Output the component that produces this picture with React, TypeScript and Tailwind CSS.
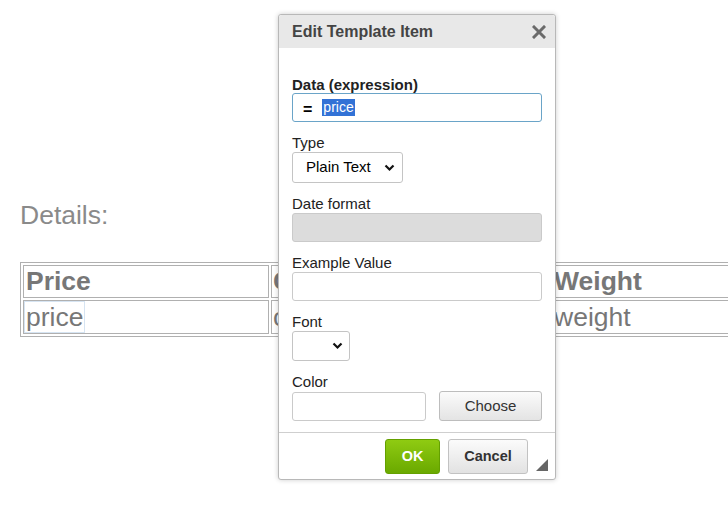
const Chevron = () => (
  <svg width="11" height="8" viewBox="0 0 11 8" className="shrink-0">
    <polyline points="1.5,1.5 5.5,5.5 9.5,1.5" fill="none" stroke="#111" strokeWidth="2.2" />
  </svg>
);

const Label: React.FC<{ children: React.ReactNode; bold?: boolean }> = ({ children, bold }) => (
  <div className={`h-[16px] text-[15px] leading-[16px] text-[#222] ${bold ? "font-bold" : ""}`}>{children}</div>
);

const App: React.FC = () => {
  return (
    <div className="relative w-[728px] h-[528px] overflow-hidden bg-white font-['Liberation_Sans',Arial,sans-serif]">
      {/* page behind the dialog */}
      <div className="pt-[200px] pl-[20px]">
        <div className="text-[26.5px] leading-[30px] text-[#8a8a8a]">Details:</div>
        <table className="mt-[32px] w-[900px] border border-[#b0b0b0] border-separate border-spacing-[2px] text-[26.5px] leading-[29px] text-[#777]">
          <tbody>
            <tr className="h-[33px]">
              <th className="w-[246px] border border-[#b0b0b0] px-[2px] py-0 text-left font-bold">Price</th>
              <th className="w-[279px] border border-[#b0b0b0] px-[1px] py-0 text-left font-bold">C</th>
              <th className="border border-[#b0b0b0] px-[1px] py-0 text-left font-bold">Weight</th>
            </tr>
            <tr className="h-[33px]">
              <td className="border border-[#b0b0b0] p-0">
                <span className="inline-block border border-[#d6e4f2] px-[1px] leading-[30px]">price</span>
              </td>
              <td className="border border-[#b0b0b0] px-[1px] py-0">c</td>
              <td className="border border-[#b0b0b0] px-[1px] py-0">weight</td>
            </tr>
          </tbody>
        </table>
      </div>

      {/* dialog */}
      <div className="absolute left-[278px] top-[14px] w-[278px] h-[466px] flex flex-col border border-[#b8b8b8] rounded-[3px] bg-white shadow-[0_0_5px_rgba(0,0,0,0.2)]">
        <div className="h-[33px] shrink-0 flex items-center justify-between pl-[13px] pr-[9px] bg-[#e8e8e8] rounded-t-[3px]">
          <span className="text-[16px] font-bold text-[#444]">Edit Template Item</span>
          <svg width="14" height="14" viewBox="0 0 14 14">
            <path d="M2 2 L12 12 M12 2 L2 12" stroke="#6a6a6a" strokeWidth="3" strokeLinecap="square" />
          </svg>
        </div>

        <div className="flex-1 px-[13px] pt-[29px]">
          <Label bold>Data (expression)</Label>
          <div className="h-[29px] flex items-center border border-[#6aa4c8] rounded-[3px] pl-[10px] text-[14px]">
            <span className="font-bold text-black text-[16px] mt-[4px]">=</span>
            <span className="ml-[10px] bg-[#3272d6] text-white leading-[17px] px-[1px]">price</span>
          </div>

          <div className="mt-[13px]">
            <Label>Type</Label>
            <div className="mt-[1px] w-[111px] h-[31px] flex items-center justify-between border border-[#c4c4c4] rounded-[3px] pl-[13px] pr-[7px] text-[15px] text-black">
              <span>Plain Text</span>
              <Chevron />
            </div>
          </div>

          <div className="mt-[13px]">
            <Label>Date format</Label>
            <div className="mt-[1px] h-[29px] border border-[#cacaca] rounded-[3px] bg-[#dcdcdc]" />
          </div>

          <div className="mt-[13px]">
            <Label>Example Value</Label>
            <div className="mt-[1px] h-[29px] border border-[#cacaca] rounded-[3px]" />
          </div>

          <div className="mt-[13px]">
            <Label>Font</Label>
            <div className="mt-[1px] w-[58px] h-[30px] flex items-center justify-end border border-[#c4c4c4] rounded-[3px] pr-[6px]">
              <Chevron />
            </div>
          </div>

          <div className="mt-[13px]">
            <Label>Color</Label>
            <div className="mt-[1px] flex items-center gap-[13px]">
              <div className="w-[134px] h-[29px] border border-[#cacaca] rounded-[3px]" />
              <button className="w-[103px] h-[30px] border border-[#bdbdbd] rounded-[3px] bg-gradient-to-b from-[#fbfbfb] to-[#e4e4e4] text-[15px] text-[#333]">
                Choose
              </button>
            </div>
          </div>
        </div>

        <div className="relative h-[47px] shrink-0 border-t border-[#cfcfcf] flex justify-end items-start pt-[6px] pr-[27px] gap-[8px]">
          <button className="w-[55px] h-[35px] rounded-[3px] border border-[#64a000] bg-gradient-to-b from-[#8fcb12] to-[#6aa900] text-[14.5px] font-bold text-white">
            OK
          </button>
          <button className="w-[80px] h-[35px] rounded-[3px] border border-[#c2c2c2] bg-gradient-to-b from-[#fbfbfb] to-[#e2e2e2] text-[14.5px] font-bold text-[#333]">
            Cancel
          </button>
          <svg width="12" height="12" viewBox="0 0 12 12" className="absolute right-[7px] bottom-[8px]">
            <polygon points="12,0 12,12 0,12" fill="#666" />
          </svg>
        </div>
      </div>
    </div>
  );
};

export default App;
